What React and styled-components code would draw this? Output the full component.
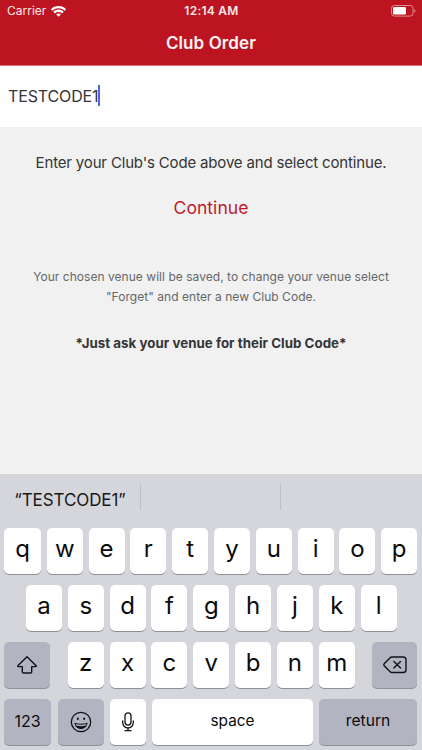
import React from "react";
import styled, { createGlobalStyle } from "styled-components";

const Global = createGlobalStyle`
  *, *::before, *::after { box-sizing: border-box; }
  body { margin: 0; background: #f1f1f1; }
`;

const Screen = styled.div`
  width: 422px;
  height: 750px;
  display: flex;
  flex-direction: column;
  overflow: hidden;
  background: #f1f1f1;
  color: #343536;
  font-family: Inter, "Liberation Sans", sans-serif;
`;

const Header = styled.header`
  height: 66px;
  flex: none;
  background: #bd1421;
  border-bottom: 1px solid #d9727a;
  color: #fff;
`;

const StatusBar = styled.div`
  height: 22px;
  display: grid;
  grid-template-columns: 1fr auto 1fr;
  align-items: center;
  padding: 0 6px 0 7px;
`;

const Carrier = styled.div`
  display: flex;
  align-items: center;
  gap: 5px;
  font-size: 12px;
  line-height: 22px;
  letter-spacing: 0;
  color: #fbe9ea;
`;

const Clock = styled.div`
  font-size: 12px;
  font-weight: 600;
  line-height: 22px;
  letter-spacing: 0.25px;
  color: #fbe9ea;
`;

const BatterySlot = styled.div`
  display: flex;
  justify-content: flex-end;
`;

const Title = styled.h1`
  margin: 0;
  font-size: 17px;
  font-weight: 600;
  line-height: 42px;
  letter-spacing: 0.1px;
  text-align: center;
  color: #fff4f4;
`;

const CodeField = styled.div`
  height: 61px;
  flex: none;
  display: flex;
  align-items: center;
  padding: 0 8px 2px;
  background: #fff;
  font-size: 16px;
  letter-spacing: -0.13px;
  white-space: nowrap;
`;

const Caret = styled.span`
  width: 2px;
  height: 21px;
  margin-left: -1px;
  background: #4a68dc;
`;

const Content = styled.main`
  flex: 1;
  display: flex;
  flex-direction: column;
  align-items: center;
  padding-top: 24px;
  white-space: nowrap;
`;

const Prompt = styled.p`
  margin: 0;
  font-size: 15px;
  line-height: 24px;
  letter-spacing: -0.165px;
`;

const ContinueButton = styled.button`
  margin: 21px 0 0;
  padding: 0;
  border: 0;
  background: none;
  font: inherit;
  font-size: 17.6px;
  line-height: 24px;
  color: #bd1b2c;
`;

const Note = styled.p`
  margin: 47px 0 0;
  font-size: 12px;
  line-height: 20px;
  letter-spacing: 0.04px;
  text-align: center;
  color: #666768;
`;

const Hint = styled.p`
  margin: 26px 0 0;
  font-size: 13.3px;
  font-weight: 700;
  line-height: 20px;
  letter-spacing: 0.03px;
`;

const Keyboard = styled.section`
  height: 276px;
  flex: none;
  display: flex;
  flex-direction: column;
  background: #d5d6dc;
  color: #0b0b0c;
`;

const Suggestions = styled.div`
  height: 53.7px;
  flex: none;
  display: grid;
  grid-template-columns: 140px 140px 1fr;
  padding-top: 10px;
`;

const Suggestion = styled.div`
  height: 26px;
  text-align: center;
  font-size: 17px;
  line-height: 33px;
  letter-spacing: -0.1px;
  color: #17181a;
  & + & { border-left: 1px solid #bfc0c6; }
`;

const KeyRow = styled.div`
  height: 46px;
  flex: none;
  display: flex;
  justify-content: ${(p) => (p.$spread ? "space-between" : "center")};
  gap: ${(p) => (p.$spread ? 0 : "5.85px")};
  margin-bottom: 11.1px;
  padding: ${(p) => (p.$spread ? "0 4.7px 0 4.3px" : "0 4.2px 0 4.8px")};
`;

const KeyGroup = styled.div`
  display: flex;
  gap: 5.85px;
  margin-left: 0.8px;
`;

const Key = styled.button`
  width: ${(p) => p.$width || 36}px;
  height: 46px;
  flex: none;
  display: flex;
  align-items: center;
  justify-content: center;
  border: 0;
  border-radius: 5px;
  margin-left: ${(p) => p.$before || 0}px;
  padding: 0 0 ${(p) => p.$lift ?? 3}px;
  background: ${(p) => (p.$dark ? "#b2b5c1" : "#fff")};
  box-shadow: 0 1px 0 #8f9197;
  color: inherit;
  font-family: inherit;
  font-size: ${(p) => p.$size || 24}px;
  font-weight: ${(p) => (p.$size ? 400 : 370)};
  line-height: 30px;
`;

const Icon = styled.svg`
  display: block;
  flex: none;
  overflow: visible;
`;

const WifiIcon = () => (
  <Icon width="15" height="11" viewBox="0 0 15 11" fill="none" stroke="#fff" strokeWidth="2.3">
    <path d="M.7 4a9.7 9.7 0 0 1 13.6 0M3.1 6.6a6.2 6.2 0 0 1 8.8 0" />
    <path d="M7.5 10.8 5.2 8.5a3.3 3.3 0 0 1 4.6 0Z" fill="#fff" stroke="none" />
  </Icon>
);

const BatteryIcon = () => (
  <Icon width="25" height="12" viewBox="0 0 25 12">
    <rect x=".5" y=".5" width="21.5" height="10.6" rx="2.8" fill="none" stroke="#e38b91" />
    <rect x="2" y="2" width="13" height="7.6" rx="1.4" fill="#fff" />
    <path d="M23.3 4v3.8c1.6-.6 1.6-3.2 0-3.8Z" fill="#e38b91" />
  </Icon>
);

const ShiftIcon = () => (
  <Icon width="20" height="18" viewBox="0 0 20 18" fill="none" stroke="#111217" strokeWidth="1.4" strokeLinejoin="round">
    <path d="M10 .8 19.1 9.8c.4.4.2.8-.3.8h-4.1v5.3c0 .7-.4 1.1-1.1 1.1H6.4c-.7 0-1.1-.4-1.1-1.1v-5.3H1.2c-.5 0-.7-.4-.3-.8Z" />
  </Icon>
);

const DeleteIcon = () => (
  <Icon width="24" height="18" viewBox="0 0 24 18" fill="none" stroke="#111217" strokeWidth="1.4" strokeLinecap="round" strokeLinejoin="round">
    <path d="M9 1h11.2A2.8 2.8 0 0 1 23 3.8v9.9a2.8 2.8 0 0 1-2.8 2.8H9c-.8 0-1.4-.3-1.9-.8L1.2 9.8c-.6-.6-.6-1.4 0-2l5.9-6C7.6 1.3 8.2 1 9 1Z" />
    <path d="m10.9 5.5 6.6 6.6m0-6.6-6.6 6.6" />
  </Icon>
);

const EmojiIcon = () => (
  <Icon width="22" height="22" viewBox="0 0 22 22">
    <circle cx="11" cy="11" r="9.7" fill="none" stroke="#111217" strokeWidth="1.3" />
    <ellipse cx="7.8" cy="7.7" rx="1" ry="1.3" fill="#111217" />
    <ellipse cx="14.2" cy="7.7" rx="1" ry="1.3" fill="#111217" />
    <path d="M4.4 11.8c4.2 1.2 9 1.2 13.2 0-.4 3.8-3.2 6.3-6.6 6.3s-6.2-2.5-6.6-6.3Z" fill="#111217" />
    <path d="M5.6 13.1c3.5.9 7.3.9 10.8 0l-.6 1.5c-3.1.8-6.5.8-9.6 0Z" fill="#b2b5c1" />
  </Icon>
);

const MicIcon = () => (
  <Icon width="12" height="20" viewBox="0 0 12 20" fill="none" stroke="#111217" strokeWidth="1.3" strokeLinecap="round">
    <rect x="3" y=".8" width="6" height="12.3" rx="3" />
    <path d="M.7 9v1.7a5.3 5.3 0 0 0 10.6 0V9M6 16v2.6M3 18.7h6" />
  </Icon>
);

const letters = (row) => [...row].map((c) => <Key key={c}>{c}</Key>);

export default function App() {
  return (
    <Screen>
      <Global />
      <Header>
        <StatusBar>
          <Carrier>Carrier <WifiIcon /></Carrier>
          <Clock>12:14 AM</Clock>
          <BatterySlot><BatteryIcon /></BatterySlot>
        </StatusBar>
        <Title>Club Order</Title>
      </Header>
      <CodeField>TESTCODE1<Caret /></CodeField>
      <Content>
        <Prompt>Enter your Club's Code above and select continue.</Prompt>
        <ContinueButton>Continue</ContinueButton>
        <Note>
          Your chosen venue will be saved, to change your venue select
          <br />
          "Forget" and enter a new Club Code.
        </Note>
        <Hint>*Just ask your venue for their Club Code*</Hint>
      </Content>
      <Keyboard>
        <Suggestions>
          <Suggestion>“TESTCODE1”</Suggestion>
          <Suggestion />
          <Suggestion />
        </Suggestions>
        <KeyRow $spread>
          <Key $width={36.6}>q</Key>
          {letters("wertyuiop")}
        </KeyRow>
        <KeyRow>{letters("asdfghjkl")}</KeyRow>
        <KeyRow $spread>
          <Key $dark $width={45.5} $lift={0}><ShiftIcon /></Key>
          <KeyGroup>{letters("zxcvbnm")}</KeyGroup>
          <Key $dark $width={45.5} $lift={0}><DeleteIcon /></Key>
        </KeyRow>
        <KeyRow $spread>
          <Key $dark $width={46.5} $size={16} $lift={1}>123</Key>
          <Key $dark $width={46.5} $lift={0} $before={0.7}><EmojiIcon /></Key>
          <Key $lift={0}><MicIcon /></Key>
          <Key $width={160.5} $size={15.3} $lift={1}>space</Key>
          <Key $dark $width={98.5} $size={15.6} $lift={1}>return</Key>
        </KeyRow>
      </Keyboard>
    </Screen>
  );
}
